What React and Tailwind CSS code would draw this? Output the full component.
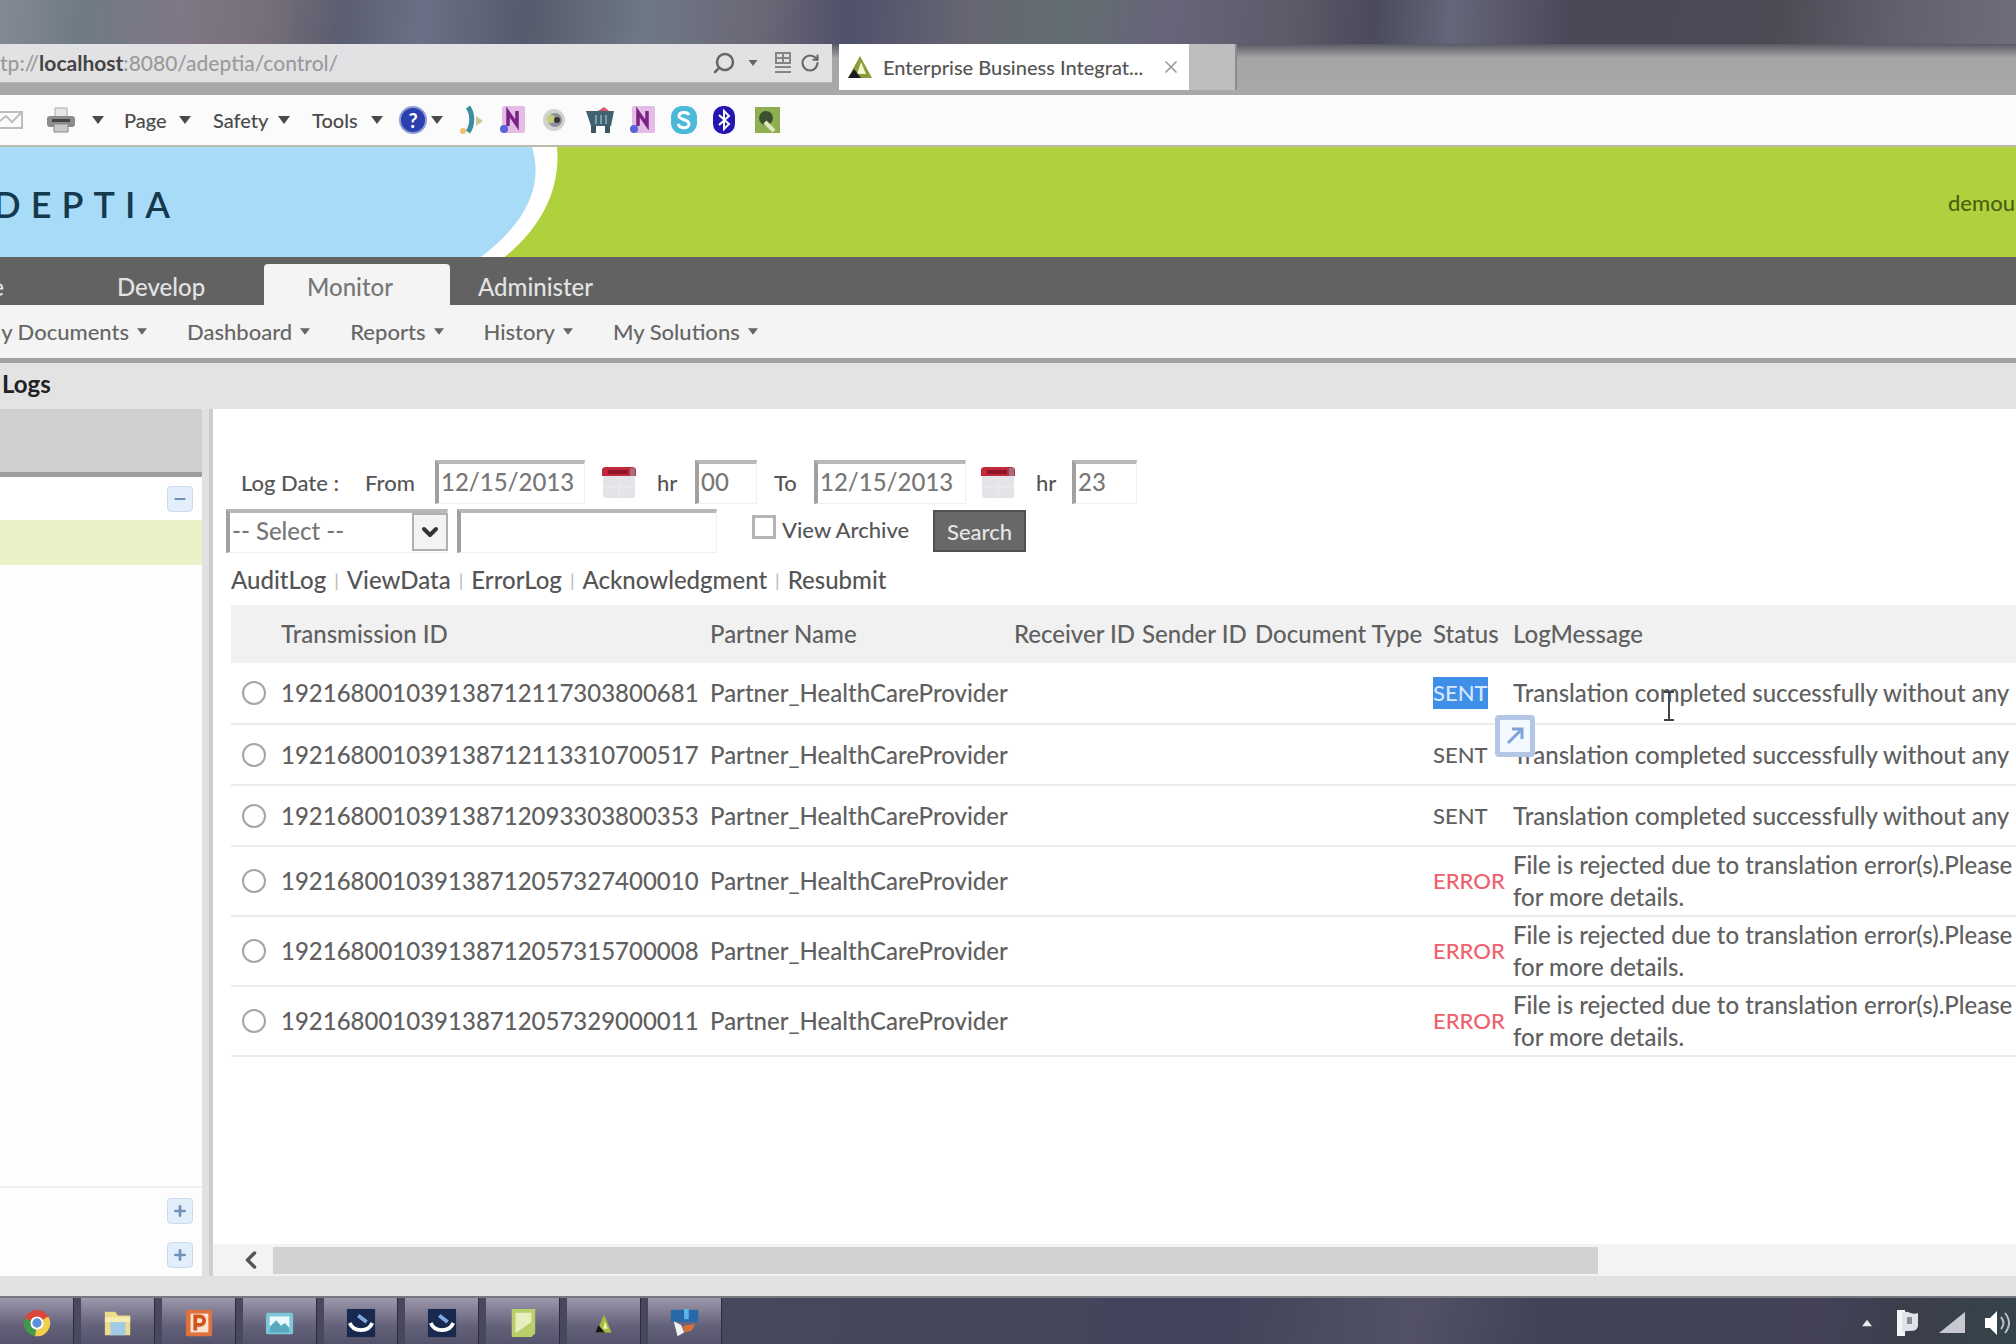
import React, { useState } from "react";
import { ChevronDown, ChevronLeft, Search, RotateCw, X, Minus, Plus } from "lucide-react";

const menus = ["Dashboard", "Reports", "History", "My Solutions"];

const actions = ["AuditLog", "ViewData", "ErrorLog", "Acknowledgment", "Resubmit"];

const rows = [
  { id: "192168001039138712117303800681", status: "SENT", selected: true },
  { id: "192168001039138712113310700517", status: "SENT" },
  { id: "192168001039138712093303800353", status: "SENT" },
  { id: "192168001039138712057327400010", status: "ERROR" },
  { id: "192168001039138712057315700008", status: "ERROR" },
  { id: "192168001039138712057329000011", status: "ERROR" },
];

const Caret = ({ className = "w-3 h-2" }) => (
  <svg viewBox="0 0 12 8" className={className} fill="currentColor" aria-hidden="true">
    <path d="M0 0h12L6 8z" />
  </svg>
);

const OneNote = () => (
  <svg viewBox="0 0 30 30" className="w-[30px] h-[30px]">
    <rect x="5" y="1" width="23" height="27" rx="2" fill="#e3bde6" />
    <path d="M11 21V7l9 13V6" fill="none" stroke="#7a2382" strokeWidth="3.5" />
    <circle cx="7" cy="24" r="4" fill="#5a62d8" />
  </svg>
);

const Calendar = () => (
  <svg viewBox="0 0 36 34" className="w-9 h-[34px]">
    <rect x="2" y="5" width="32" height="28" rx="2" fill="#e3e4e8" />
    <path d="M2 22h32M18 12v21" stroke="#ececf0" strokeWidth="1" />
    <path d="M1 11V5q0-3 4-3h26q4 0 4 3v6z" fill="#c2273a" />
    <path d="M7 5h20v4H7z" fill="#8d1525" />
    <path d="M29 3h5v8h-5z" fill="#a5707e" />
  </svg>
);

const AddressBar = () => (
  <div className="flex h-[51px] bg-[linear-gradient(#5a5a66_0,#a5a5a6_14px,#a9a9aa_100%)]">
    <div className="flex items-center w-[832px] h-[39px] pr-3 bg-[#e2e2e4] border-b border-[#b5b5b5]">
      <div className="flex-1 flex items-center text-[21px] text-[#9a9a9a] whitespace-nowrap">
        <span>tp://</span>
        <span className="font-bold text-[#444]">localhost</span>
        <span>:8080/adeptia/control/</span>
        <input aria-label="Address" className="flex-1 min-w-0 outline-none" />
      </div>
      <Search className="w-6 h-6 text-[#666] -scale-x-100" strokeWidth={2.5} />
      <Caret className="w-[10px] h-[6px] ml-3 text-[#666]" />
      <svg viewBox="0 0 18 24" className="w-[18px] h-6 ml-4" fill="none" stroke="#858585" strokeWidth="2">
        <path d="M2 2h14v10H2zM2 7h14M9 2v10M1 16h16M1 21h16" />
      </svg>
      <RotateCw className="w-5 h-6 ml-2 text-[#666]" strokeWidth={2.5} />
    </div>
    <div className="flex items-center w-[350px] h-[46px] ml-[7px] pl-2 bg-white text-xl text-[#555] whitespace-nowrap">
      <svg viewBox="0 0 26 24" className="w-[26px] h-6">
        <path d="M13 1l12 22H1z" fill="#8b9a3a" />
        <path d="M14 7l5 12h-9z" fill="#f3f6cf" />
        <path d="M7 14l7 9H1z" fill="#1c1c1c" />
      </svg>
      <span className="flex-1 ml-[10px]">Enterprise Business Integrat...</span>
      <button aria-label="Close tab" className="mr-2">
        <X className="w-5 h-5 text-[#999]" strokeWidth={2} />
      </button>
    </div>
    <button aria-label="New tab" className="w-12 h-[46px] bg-[#bcbec0] border-r-2 border-[#8b8b8b]" />
  </div>
);

const CommandBar = () => (
  <div className="flex items-center h-[52px] bg-[#fbfbfb] border-b-2 border-[#b9bda8] text-xl text-[#4a4a4a]">
    <svg viewBox="0 0 24 22" className="w-6 h-[22px]" fill="none" stroke="#bdbdb8" strokeWidth="2">
      <path d="M0 3h22v16H0M0 12l6-5 6 6 9-9" />
    </svg>
    <svg viewBox="0 0 30 28" className="w-[30px] h-7 ml-[22px]">
      <path d="M9 2h12v9H9z" fill="#e8e8e8" stroke="#aaa" />
      <rect x="1" y="10" width="28" height="11" rx="3" fill="#8b8b8b" />
      <path d="M6 13h18v3H6z" fill="#444" />
      <path d="M8 18h14v8H8z" fill="#c9c9c9" stroke="#888" />
    </svg>
    <Caret className="w-3 h-2 ml-4" />
    <button className="flex items-center justify-between w-[67px] ml-[20px]">Page<Caret /></button>
    <button className="flex items-center justify-between w-[77px] ml-[22px]">Safety<Caret /></button>
    <button className="flex items-center justify-between w-[71px] ml-[22px]">Tools<Caret /></button>
    <button aria-label="Help" className="flex items-center gap-1 ml-4">
      <span className="flex items-center justify-center w-7 h-7 rounded-full bg-[#2b3fae] border-2 border-[#8f9bd8] text-white font-bold text-xl leading-none">?</span>
      <Caret />
    </button>
    <div className="flex items-center gap-3 ml-4">
      <svg viewBox="0 0 26 30" className="w-[26px] h-[30px]">
        <path d="M9 2c5 7 5 18 0 25" fill="none" stroke="#3a8ea0" strokeWidth="5" />
        <path d="M17 11l7 5-7 5z" fill="#c7c79a" />
        <circle cx="4" cy="26" r="3" fill="#f0c070" />
      </svg>
      <OneNote />
      <svg viewBox="0 0 30 30" className="w-[30px] h-[30px]">
        <circle cx="15" cy="15" r="11" fill="#d2d2cc" />
        <circle cx="16" cy="15" r="7" fill="#8c8f9c" />
        <circle cx="12" cy="14" r="4" fill="#c8cc7a" />
        <circle cx="18" cy="15" r="3" fill="#333" />
      </svg>
      <svg viewBox="0 0 30 30" className="w-[30px] h-[30px] ml-1">
        <path d="M1 6h28l-3 15H6z" fill="#41616f" />
        <path d="M13 6l6-4 5 4z" fill="#d9536f" />
        <path d="M6 21h5v7H6zM20 21h5v7h-5z" fill="#3c5662" />
        <path d="M11 10v9M16 10v9M21 10v9" stroke="#8fb1bd" strokeWidth="1.5" />
      </svg>
      <OneNote />
      <svg viewBox="0 0 30 30" className="w-[30px] h-[30px]">
        <rect x="2" y="1" width="26" height="28" rx="11" fill="#4cb9da" />
        <path d="M20 10c-2-4-10-3-10 1s10 3 10 8-9 5-11 0" fill="none" stroke="#fff" strokeWidth="3" />
      </svg>
      <svg viewBox="0 0 26 30" className="w-[26px] h-[30px]">
        <rect x="2" y="1" width="22" height="28" rx="10" fill="#2416b0" />
        <path d="M8 10l10 9-5 5V6l5 5-10 9" fill="none" stroke="#fff" strokeWidth="2" />
      </svg>
      <svg viewBox="0 0 30 30" className="w-[30px] h-[30px] ml-1">
        <rect x="2" y="2" width="25" height="26" fill="#8fae54" />
        <circle cx="13" cy="13" r="7" fill="#3a5130" />
        <path d="M12 17l9 9" stroke="#dfe8bd" strokeWidth="4" />
      </svg>
    </div>
  </div>
);

const Banner = () => (
  <header className="flex items-center justify-between h-[110px] bg-[#afd13e] relative overflow-hidden">
    <svg viewBox="0 0 560 112" className="absolute left-0 top-0 w-[560px] h-28">
      <path d="M0 0H557C561 42 541 82 502 112H0z" fill="#fff" />
      <path d="M0 0H532C545 42 522 80 478 112H0z" fill="#a8dbf8" />
    </svg>
    <div className="relative flex justify-end w-[180px] overflow-hidden pt-1">
      <span className="text-4xl font-semibold tracking-[10px] text-[#15394d] whitespace-nowrap">ADEPTIA</span>
    </div>
    <div className="w-[68px] overflow-hidden text-[22px] text-[#4b6110] whitespace-nowrap">demouser</div>
  </header>
);

const Nav = () => (
  <>
    <nav className="flex items-end h-12 bg-[#626262] text-2xl leading-[36px] text-[#e3e3e3] whitespace-nowrap">
      <a href="#home" className="flex justify-end w-1 overflow-hidden">Home</a>
      <a href="#develop" className="w-[260px] pl-[113px]">Develop</a>
      <a href="#monitor" className="w-[186px] h-[41px] pt-[5px] pl-[43px] rounded-t bg-[#f4f4f4] text-[#777]">Monitor</a>
      <a href="#administer" className="ml-7">Administer</a>
    </nav>
    <div className="flex items-center gap-10 h-[53px] bg-[#f4f4f4] text-[22px] text-[#666] whitespace-nowrap">
      <button className="flex items-center justify-end gap-2 w-[147px] overflow-hidden">
        <span>My Documents</span>
        <Caret className="w-[10px] h-[7px] shrink-0" />
      </button>
      {menus.map((m) => (
        <button key={m} className="flex items-center gap-2">
          {m}
          <Caret className="w-[10px] h-[7px]" />
        </button>
      ))}
    </div>
    <div className="h-[51px] border-t-[5px] border-[#a3a2a3] bg-[#e4e3e4] overflow-hidden">
      <h1 className="pl-[2px] text-2xl leading-[42px] font-bold text-[#222]">Logs</h1>
    </div>
  </>
);

const SideToggle = ({ open }) => (
  <button
    aria-label={open ? "Collapse" : "Expand"}
    className="flex items-center justify-center w-[26px] h-[26px] rounded bg-[#e3eefb] border border-[#cbdcf0] text-[#6f93b8]"
  >
    {open ? <Minus className="w-4 h-4" strokeWidth={3} /> : <Plus className="w-4 h-4" strokeWidth={4} />}
  </button>
);

const Sidebar = () => (
  <aside className="flex flex-col w-[202px] bg-[#fdfdfd]">
    <div className="h-[68px] bg-[#d0d0d0] border-b-[5px] border-[#9d9d9d]" />
    <div className="flex justify-end items-center h-[43px] pr-[9px] bg-white">
      <SideToggle open />
    </div>
    <div className="h-[45px] bg-[#e9f1c8]" />
    <div className="flex-1" />
    <div className="flex flex-col items-end gap-[18px] pt-[10px] pr-[9px] pb-2 border-t-2 border-[#f0f0f0]">
      <SideToggle />
      <SideToggle />
    </div>
  </aside>
);

const field = "h-11 border-t-4 border-l-4 border-r border-b border-t-[#b8b8b8] border-l-[#a0a0a0] border-r-[#f0f0f0] border-b-[#f0f0f0] bg-white px-[2px] pb-1 outline-none text-2xl text-[#777]";

const SearchForm = () => {
  const [from, setFrom] = useState("12/15/2013");
  const [to, setTo] = useState("12/15/2013");
  const [fromHr, setFromHr] = useState("00");
  const [toHr, setToHr] = useState("23");
  const [archive, setArchive] = useState(false);

  return (
    <form className="text-[22px] text-[#555] whitespace-nowrap" onSubmit={(e) => e.preventDefault()}>
      <div className="flex items-center h-11 pl-[15px]">
        <span className="w-[124px]">Log Date :</span>
        <label htmlFor="from" className="w-[70px]">From</label>
        <input id="from" className={`${field} w-[150px]`} value={from} onChange={(e) => setFrom(e.target.value)} />
        <button type="button" aria-label="Pick from date" className="ml-4"><Calendar /></button>
        <label htmlFor="fromHr" className="ml-5 w-[38px]">hr</label>
        <input id="fromHr" className={`${field} w-[62px]`} value={fromHr} onChange={(e) => setFromHr(e.target.value)} />
        <label htmlFor="to" className="ml-[17px] w-10">To</label>
        <input id="to" className={`${field} w-[152px]`} value={to} onChange={(e) => setTo(e.target.value)} />
        <button type="button" aria-label="Pick to date" className="ml-[14px]"><Calendar /></button>
        <label htmlFor="toHr" className="ml-5 w-9">hr</label>
        <input id="toHr" className={`${field} w-[65px]`} value={toHr} onChange={(e) => setToHr(e.target.value)} />
      </div>
      <div className="flex items-center mt-[5px] h-11">
        <div className="relative">
          <select aria-label="Search field" className={`${field} w-[222px] appearance-none`}>
            <option>-- Select --</option>
          </select>
          <span className="absolute right-0 top-1 flex items-center justify-center w-9 h-[38px] bg-[#f3f3f3] border-2 border-[#b0b0b0] pointer-events-none">
            <ChevronDown className="w-6 h-6 text-[#333]" strokeWidth={4} />
          </span>
        </div>
        <input aria-label="Search text" className={`${field} w-[260px] ml-[9px]`} />
        <input
          id="archive"
          type="checkbox"
          className="appearance-none w-6 h-6 ml-[35px] mb-2 border-[3px] border-[#b5b5b5] bg-white"
          checked={archive}
          onChange={(e) => setArchive(e.target.checked)}
        />
        <label htmlFor="archive" className="ml-[6px] w-[151px] pb-1">View Archive</label>
        <button className="w-[93px] h-[42px] bg-[#686868] border-2 border-[#505050] text-[#e6e6e6] text-[22px]">Search</button>
      </div>
      <div className="flex items-center gap-2 mt-[11px] pl-[5px] text-2xl leading-8">
        {actions.map((a, i) => (
          <React.Fragment key={a}>
            {i > 0 && <span className="text-lg text-[#bbb]">|</span>}
            <a href={`#${a}`}>{a}</a>
          </React.Fragment>
        ))}
      </div>
    </form>
  );
};

const LogTable = () => {
  const [picked, setPicked] = useState(null);

  return (
    <table className="table-fixed w-full border-collapse text-left text-2xl leading-8 text-[#606060] whitespace-nowrap">
      <colgroup>
        <col className="w-[50px]" />
        <col className="w-[429px]" />
        <col className="w-[304px]" />
        <col className="w-32" />
        <col className="w-[113px]" />
        <col className="w-[178px]" />
        <col className="w-20" />
        <col />
      </colgroup>
      <thead>
        <tr className="h-[58px] bg-[#f1f1f1]">
          <th aria-label="Select" />
          <th className="font-medium">Transmission ID</th>
          <th className="font-medium">Partner Name</th>
          <th className="font-medium">Receiver ID</th>
          <th className="font-medium">Sender ID</th>
          <th className="font-medium">Document Type</th>
          <th className="font-medium">Status</th>
          <th className="font-medium">LogMessage</th>
        </tr>
      </thead>
      <tbody>
        {rows.map((r) => (
          <tr key={r.id} className={`border-b-2 border-[#ececec] ${r.status === "ERROR" ? "h-[70px]" : "h-[61px]"}`}>
            <td className="pl-[11px]">
              <input
                type="radio"
                name="log"
                aria-label={r.id}
                className="block appearance-none w-6 h-6 rounded-full border-2 border-[#a5a5a5] bg-white"
                checked={picked === r.id}
                onChange={() => setPicked(r.id)}
              />
            </td>
            <td>{r.id}</td>
            <td>Partner_HealthCareProvider</td>
            <td />
            <td />
            <td />
            <td className={`text-[22px] ${r.status === "ERROR" ? "text-[#f0606c]" : ""}`}>
              {r.selected ? (
                <span className="relative inline-block bg-[#3f8fe8] text-[#d5e8ff]">
                  {r.status}
                  {/* accelerator button that pops up next to a selection */}
                  <span className="absolute left-[62px] top-[38px] z-10 flex items-center justify-center w-10 h-[42px] bg-[#f4f8ff] border-[5px] border-[#b4c6e6] rounded-sm">
                    <svg viewBox="0 0 24 24" className="w-6 h-6" fill="none" stroke="#7fa4da" strokeWidth="3">
                      <path d="M5 19L18 6M9 5h10v10" />
                    </svg>
                  </span>
                </span>
              ) : (
                r.status
              )}
            </td>
            <td className="relative overflow-hidden">
              {r.status === "ERROR" ? (
                <>File is rejected due to translation error(s).Please<br />for more details.</>
              ) : (
                "Translation completed successfully without any"
              )}
              {r.selected && (
                <svg viewBox="0 0 12 32" className="absolute left-[150px] top-[27px] w-3 h-8" fill="none" stroke="#444" strokeWidth="2">
                  <path d="M1 2h10M6 2v27M1 30h10" />
                </svg>
              )}
            </td>
          </tr>
        ))}
      </tbody>
    </table>
  );
};

const taskIcons = [
  <><circle cx="16" cy="16" r="14" fill="#d9473c" /><path d="M16 16L3 11a14 14 0 0 0 11 19z" fill="#3f9a4c" /><path d="M16 16l12-7a14 14 0 0 1-14 21z" fill="#f0cf4a" /><circle cx="16" cy="16" r="6" fill="#5b8fd6" stroke="#fff" strokeWidth="2" /></>,
  <><path d="M2 4h11l3 4h13v21H2z" fill="#ecdc8c" /><path d="M8 14h16v15H8z" fill="#9fcbe6" /><path d="M2 10h27v5H2z" fill="#f6edb3" /></>,
  <><rect x="2" y="2" width="28" height="28" rx="2" fill="#e0703c" /><path d="M7 6h19v20H7z" fill="#fbe3d2" /><path d="M12 24V9h5a4 4 0 0 1 0 9h-5" fill="none" stroke="#d0541c" strokeWidth="4" /></>,
  <><rect x="1" y="5" width="29" height="23" rx="2" fill="#7cc5da" /><path d="M5 9h21v14H5z" fill="#e9f8fc" /><path d="M5 20l7-7 5 6 4-3 5 5v5H5z" fill="#59aabf" /></>,
  <><rect x="1" y="1" width="30" height="30" fill="#18284f" /><path d="M4 16c4 10 20 10 24 0" fill="none" stroke="#fff" strokeWidth="4" /><path d="M13 8l9 7" stroke="#7fa8dd" strokeWidth="4" /></>,
  <><rect x="1" y="1" width="30" height="30" fill="#18284f" /><path d="M4 16c4 10 20 10 24 0" fill="none" stroke="#fff" strokeWidth="4" /><path d="M13 8l9 7" stroke="#7fa8dd" strokeWidth="4" /></>,
  <><path d="M4 1h25v26l-4 4H4z" fill="#b8cf6a" /><path d="M8 5l17 0v10L8 27z" fill="#e6efbd" /></>,
  <><path d="M16 7l8 19H8z" fill="#a6bd3b" /><path d="M10 18l7 8H7z" fill="#161616" /><path d="M17 14l3 8h-5z" fill="#eef3b8" /></>,
  <><path d="M1 2h29v13H1z" fill="#2768a8" /><path d="M15 1h5v11h-5z" fill="#5bb4ea" /><path d="M4 14l8 4 3 8-7 4z" fill="#f2f2f2" /><path d="M14 19l13-2-4 7-8 2z" fill="#d8703c" /></>,
];

const Taskbar = () => (
  <footer className="flex items-stretch justify-between h-12 bg-[linear-gradient(100deg,#4a4a5e_0%,#45455c_52%,#41435a_60%,#525166_70%,#424259_76%,#434259_90%,#3d3e4c_94%,#34434a_100%)] border-t-2 border-[#77777f]">
    <div className="flex gap-[7px]">
      {taskIcons.map((icon, i) => (
        <button key={i} aria-label={`Task ${i + 1}`} className="flex items-center justify-center w-[74px] pt-1 bg-[linear-gradient(#9c98ac,#64617a_60%,#55536c)] border-r border-[#2c2c3c]">
          <svg viewBox="0 0 32 32" className="w-[30px] h-[30px]">{icon}</svg>
        </button>
      ))}
    </div>
    <div className="flex items-center gap-[18px] pt-1 pr-1 text-[#e8e8ee]">
      <Caret className="w-[10px] h-2 rotate-180" />
      <svg viewBox="0 0 26 28" className="w-[26px] h-7 ml-1">
        <path d="M3 1h8v26H3z" fill="#f4f4f4" />
        <path d="M8 4c6-4 9 3 16 0v13c-2 8-10 3-16 6z" fill="#e2e2ea" />
        <path d="M13 8h5v7h-5z" fill="#8b8b9a" />
      </svg>
      <svg viewBox="0 0 28 22" className="w-7 h-[22px]"><path d="M27 0v21H1z" fill="#c8c8d0" /></svg>
      <svg viewBox="0 0 28 26" className="w-7 h-[26px]">
        <path d="M1 8h5l7-7v24l-7-7H1z" fill="#fff" />
        <path d="M17 7q5 6 0 12M21 3q8 10 0 20" fill="none" stroke="#b5c1c5" strokeWidth="2" />
      </svg>
    </div>
  </footer>
);

const App = () => {
  return (
    <div className="flex flex-col h-screen overflow-hidden bg-[#e4e3e4] font-medium font-['Lato','Open_Sans',sans-serif]">
      <div className="h-11 bg-[linear-gradient(95deg,#858a94_0%,#6f7b82_4%,#7f7785_9%,#777079_13%,#5b5d70_17%,#6a7186_21%,#565a6c_26%,#6e7886_32%,#6b6675_38%,#4f506b_42%,#666672_48%,#626d70_53%,#68647a_58%,#5c5b68_64%,#4a4a5c_68%,#66667a_72%,#4a4857_78%,#4c4a55_88%,#62606c_94%,#6f6d7a_100%)]" />
      <AddressBar />
      <CommandBar />
      <Banner />
      <Nav />
      <div className="flex flex-1 min-h-0">
        <Sidebar />
        <div className="w-[11px] bg-[#e2e1e1] border-r-4 border-[#cfcece]" />
        <main className="flex flex-col flex-1 min-w-0 bg-white">
          <div className="pt-[51px] pl-[13px]">
            <SearchForm />
          </div>
          <div className="flex-1 pt-[9px] pl-[18px] overflow-hidden">
            <LogTable />
          </div>
          <div className="flex items-center h-8 bg-[#f3f3f3]">
            <button aria-label="Scroll left" className="flex justify-center w-[60px] pl-4">
              <ChevronLeft className="w-7 h-7 text-[#555]" strokeWidth={3} />
            </button>
            <div className="flex-[76] h-[27px] bg-[#d2d2d2]" />
            <div className="flex-[24]" />
          </div>
        </main>
      </div>
      <div className="h-5 bg-[#e1e1e1]" />
      <Taskbar />
    </div>
  );
};

export default App;
